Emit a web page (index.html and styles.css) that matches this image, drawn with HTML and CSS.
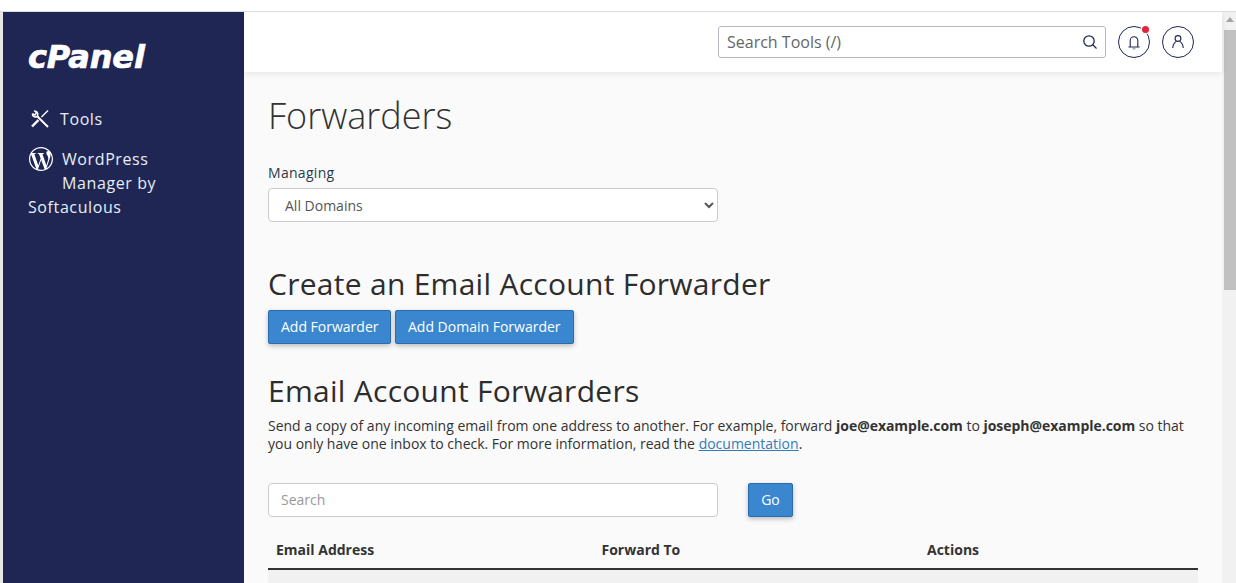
FILE: index.html
```html
<!DOCTYPE html>
<html lang="en">
<head>
<meta charset="utf-8">
<title>Forwarders</title>
<link rel="stylesheet" href="styles.css">
</head>
<body>
<div class="window">
  <aside class="sidebar">
    <div class="logo">cPanel</div>
    <nav class="nav">
      <a class="nav-item tools">
        <svg class="tools-icon" viewBox="0 0 20 20" fill="none" stroke="#fff"><path stroke-width="2" d="M7.500 7.500 18 18"/><path stroke-width="1.500" d="M4.200 1.500 6.500 3.800 5 6 2.500 4.600M2.500 4.600C2 7 4.800 8.800 7 7.500 8.500 6 8 3 5.500 2.200"/><path stroke-width="1.400" d="m18 1.500-6.500 6.500"/><path stroke-width="2.400" d="M8.500 11 2 17.500"/></svg>
        <span>Tools</span>
      </a>
      <a class="nav-item wp">
        <svg class="wp-icon" viewBox="0 0 24 24"><path fill="#fff" d="M21.469 6.825c.84 1.537 1.318 3.3 1.318 5.175 0 3.979-2.156 7.456-5.363 9.325l3.295-9.527c.615-1.54.82-2.771.82-3.864 0-.405-.026-.78-.07-1.11m-7.981.105c.647-.03 1.232-.105 1.232-.105.582-.075.514-.93-.067-.899 0 0-1.755.135-2.88.135-1.064 0-2.85-.15-2.85-.15-.585-.03-.661.855-.075.885 0 0 .54.061 1.125.09l1.68 4.605-2.37 7.08L5.354 6.9c.649-.03 1.234-.1 1.234-.1.585-.075.516-.93-.065-.896 0 0-1.746.138-2.874.138-.2 0-.438-.008-.69-.015C4.911 3.15 8.235 1.215 12 1.215c2.809 0 5.365 1.072 7.286 2.833-.046-.003-.091-.009-.141-.009-1.06 0-1.812.923-1.812 1.914 0 .89.513 1.643 1.06 2.531.411.72.89 1.643.89 2.977 0 .915-.354 1.994-.821 3.479l-1.075 3.585-3.9-11.61.001.014zM12 22.784c-1.059 0-2.081-.153-3.048-.437l3.237-9.406 3.315 9.087c.024.053.05.101.078.149-1.12.393-2.325.609-3.582.609M1.211 12c0-1.564.336-3.05.935-4.39L7.290 21.709C3.694 19.960 1.212 16.271 1.211 12M12 0C5.385 0 0 5.385 0 12s5.385 12 12 12 12-5.385 12-12S18.615 0 12 0"/></svg>
        WordPress<br>Manager by<br>Softaculous
      </a>
    </nav>
  </aside>
  <div class="main">
    <header class="topbar">
      <div class="top-search">
        <span>Search Tools (/)</span>
        <svg class="mag" viewBox="0 0 16 16" fill="none" stroke="#1f2654" stroke-width="1.300"><circle cx="7" cy="7" r="5.200"/><path d="m11 11 3.500 3.500"/></svg>
      </div>
      <div class="circle bell">
        <svg viewBox="0 0 18 18" fill="none" stroke="#1f2654" stroke-width="1.100"><path d="M3.500 14h11M5.200 14V7.500a3.800 3.800 0 0 1 7.600 0V14"/><path stroke="#8a8fa8" d="M7.500 15.800h3"/></svg>
        <i class="dot"></i>
      </div>
      <div class="circle">
        <svg viewBox="0 0 18 18" fill="none" stroke="#1f2654" stroke-width="1.100"><circle cx="9" cy="5.500" r="2.900"/><path d="M3.800 15c0-3.800 1.800-5.400 3.400-6.600M14.200 15c0-3.800-1.800-5.400-3.400-6.600"/></svg>
      </div>
    </header>
    <main class="content">
      <h1>Forwarders</h1>
      <label class="managing" for="dom">Managing</label>
      <select id="dom" class="select"><option>All Domains</option></select>
      <h2 class="create">Create an Email Account Forwarder</h2>
      <div class="btns">
        <button class="btn first">Add Forwarder</button>
        <button class="btn second">Add Domain Forwarder</button>
      </div>
      <h2 class="list">Email Account Forwarders</h2>
      <p class="desc">Send a copy of any incoming email from one address to another. For example, forward <b>joe@example.com</b> to <b>joseph@example.com</b> so that you only have one inbox to check. For more information, read the <a href="#">documentation</a>.</p>
      <div class="search-row">
        <input class="search" placeholder="Search">
        <button class="btn go">Go</button>
      </div>
      <div class="thead"><b>Email Address</b><b>Forward To</b><b>Actions</b></div>
      <div class="tbody"></div>
    </main>
  </div>
  <div class="scrollbar"><div class="arrow"></div><div class="thumb"></div></div>
</div>
</body>
</html>
```

FILE: styles.css
```css
* { box-sizing: border-box; }
html, body { margin: 0; height: 100%; overflow: hidden; background: #fff; }
body { padding-top: 11px; font-family: "Open Sans", sans-serif; color: #293a4a; }
.window { display: flex; height: 572px; border-top: 1px solid #dcdcdc; overflow: hidden; }
.sidebar { width: 244px; flex: none; background: #1f2654; border-left: 3px solid #e6e6e6; padding: 0 25px; color: #e6eef6; }
.logo { margin-top: 23px; height: 45px; font: italic 700 32px/44px "DejaVu Sans", sans-serif; color: #fff; letter-spacing: -.1px; -webkit-text-stroke: .7px #fff; }
.nav { margin-top: 27px; display: flex; flex-direction: column; gap: 16px; font-size: 16px; line-height: 24px; letter-spacing: .6px; }
.nav-item { display: block; }
.tools { display: flex; align-items: center; gap: 10px; height: 24px; }
.tools-icon { width: 20px; height: 20px; margin-left: 2px; }
.wp-icon { width: 24px; height: 24px; float: left; margin: 0 9px 24px 1px; }
.main { flex: 1; min-width: 0; background: #fafafa; }
.topbar { height: 60px; background: #fff; display: flex; align-items: center; padding: 0 28px 0 474px; box-shadow: 0 2px 6px rgba(0,0,0,.08); position: relative; }
.top-search { width: 388px; height: 32px; flex: none; border: 1px solid #b9b9c6; border-radius: 3px; display: flex; align-items: center; justify-content: space-between; padding: 0 7px 0 8px; font-size: 16px; color: #666; }
.mag { width: 16px; height: 16px; }
.circle { width: 32px; height: 32px; flex: none; border: 1px solid #1f2654; border-radius: 50%; display: flex; align-items: center; justify-content: center; margin-left: 12px; position: relative; }
.circle svg { width: 18px; height: 18px; }
.dot { position: absolute; width: 7px; height: 7px; background: #e0243c; border-radius: 50%; top: -1px; right: 0; box-shadow: 0 0 0 1px #fff; }
.content { padding: 0 24px; }
h1 { margin: 23px 0 0; font-size: 36px; font-weight: 300; line-height: 42px; color: #333; }
.managing { display: block; margin-top: 26px; font-size: 14px; line-height: 20px; letter-spacing: .3px; }
.select { display: block; width: 450px; height: 34px; margin-top: 5px; padding: 0 12px; background: #fff; border: 1px solid #ccc; border-radius: 4px; font: 14px "Open Sans", sans-serif; color: #555; }
h2 { font-size: 30px; font-weight: 400; line-height: 36px; color: #2d2d2d; margin: 0; letter-spacing: .28px; }
.create { margin-top: 44px; }
.btns { display: flex; gap: 4px; margin-top: 8px; }
.btn { height: 34px; padding: 0 12px 2px; background: #3a87cf; border: 1px solid #2b6cb0; border-radius: 2px; color: #fff; font: 14px "Open Sans", sans-serif; box-shadow: 0 2px 5px rgba(0,0,0,.25); }
.first { padding-right: 11px; }
.second { padding: 0 12.500px 2px; }
.list { margin-top: 29px; }
.desc { margin: 8px 0 0; font-size: 14px; line-height: 18px; color: #333; }
.desc b { font-weight: 700; letter-spacing: -.04px; }
.desc a { color: #337ab7; text-decoration: underline; }
.search-row { display: flex; gap: 30px; margin-top: 30px; }
.search { width: 450px; height: 34px; padding: 0 12px 2px; background: #fff; border: 1px solid #ccc; border-radius: 4px; font: 14px "Open Sans", sans-serif; }
.search::placeholder { color: #999; }
.go { width: 45px; padding: 0 0 2px; }
.thead { display: grid; grid-template-columns: 325.500px 325.500px 1fr; margin-top: 15px; height: 38px; padding: 8px 8px 0; border-bottom: 2px solid #333; font-size: 14px; line-height: 20px; color: #333; }
.thead b { font-weight: 700; }
.tbody { height: 40px; background: #f1f1f1; }
.scrollbar { width: 14px; flex: none; background: #f1f1f1; }
.arrow { width: 0; height: 0; margin: 5px 0 0 4px; border: 4px solid transparent; border-top: 0; border-bottom: 5px solid #a3a3a3; }
.thumb { margin: 8px 0 0 2px; height: 260px; background: #c1c1c1; }
```
